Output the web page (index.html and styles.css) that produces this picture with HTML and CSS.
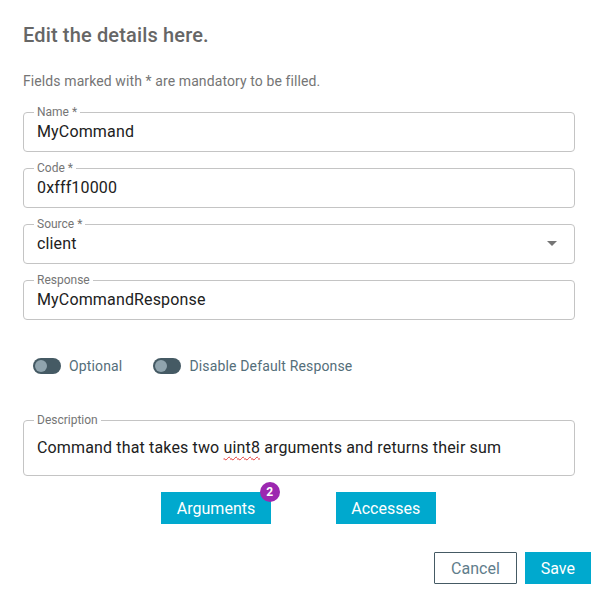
FILE: index.html
```html
<!DOCTYPE html>
<html lang="en">
<head>
<meta charset="utf-8">
<title>Edit command</title>
<link rel="stylesheet" href="styles.css">
</head>
<body>
<div class="dialog">
  <div class="content">
    <h2 class="title">Edit the details here.</h2>
    <p class="hint">Fields marked with * are mandatory to be filled.</p>
    <div class="fields">
      <fieldset class="field"><legend>Name *</legend><div class="value">MyCommand</div></fieldset>
      <fieldset class="field"><legend>Code *</legend><div class="value">0xfff10000</div></fieldset>
      <fieldset class="field"><legend>Source *</legend><div class="value select"><span>client</span><span class="arrow"></span></div></fieldset>
      <fieldset class="field"><legend>Response</legend><div class="value">MyCommandResponse</div></fieldset>
    </div>
    <div class="toggles">
      <label class="toggle"><span class="track"><span class="thumb"></span></span><span class="toggle-text">Optional</span></label>
      <label class="toggle"><span class="track"><span class="thumb"></span></span><span class="toggle-text">Disable Default Response</span></label>
    </div>
    <fieldset class="field desc"><legend>Description</legend><div class="value">Command that takes two <span class="misspelled">uint8</span> arguments and returns their sum</div></fieldset>
    <div class="tabs">
      <button class="btn primary badge-host">Arguments<span class="badge">2</span></button>
      <button class="btn primary">Accesses</button>
    </div>
  </div>
  <div class="actions">
    <button class="btn outline">Cancel</button>
    <button class="btn primary">Save</button>
  </div>
</div>
</body>
</html>
```
FILE: styles.css
```css
* { box-sizing: border-box; }
html, body { margin: 0; padding: 0; background: #fff; }
body { font-family: Roboto, "Noto Sans", Arial, sans-serif; color: #212121; }

.dialog { width: 598px; }
.content { padding: 0 23px; }

.title {
  margin: 23px 0 0;
  font-size: 20px;
  line-height: 24px;
  font-weight: 500;
  letter-spacing: 0.15px;
  color: #666666;
}
.hint {
  margin: 26px 0 0;
  font-size: 14px;
  line-height: 16px;
  letter-spacing: 0.1px;
  color: #757575;
}

.fields {
  margin-top: 17px;
  display: flex;
  flex-direction: column;
  gap: 10px;
}

.field {
  margin: 0;
  min-width: 0;
  border: 1px solid #c4c4c4;
  border-radius: 4px;
  padding: 0 13px 6px;
}
.field legend {
  font-size: 12px;
  line-height: 12px;
  padding: 0 3px;
  margin-left: -3px;
  color: #757575;
}
.value {
  font-size: 16px;
  line-height: 27px;
  letter-spacing: 0.15px;
  color: #212121;
  white-space: nowrap;
}
.select {
  display: flex;
  justify-content: space-between;
  align-items: center;
}
.arrow {
  width: 0;
  height: 0;
  margin-right: 4px;
  border-left: 5px solid transparent;
  border-right: 5px solid transparent;
  border-top: 5px solid #757575;
}

.toggles {
  margin-top: 36px;
  padding-left: 10px;
  display: flex;
  gap: 31px;
  height: 20px;
  align-items: center;
}
.toggle {
  display: flex;
  align-items: center;
  gap: 8px;
  font-size: 14px;
  letter-spacing: 0.15px;
  color: #546e7a;
}
.track {
  width: 28px;
  height: 16px;
  border-radius: 8px;
  background: #455a64;
  display: flex;
  align-items: center;
  padding-left: 2px;
}
.thumb {
  width: 12px;
  height: 12px;
  border-radius: 50%;
  background: #90a4ae;
}

.desc { margin-top: 38px; padding-bottom: 15px; }
.desc .value { padding-top: 10px; line-height: 24px; }
.misspelled {
  text-decoration: underline wavy #e53935;
  text-decoration-thickness: 1px;
  text-underline-offset: 3px;
  text-decoration-skip-ink: none;
}

.tabs {
  margin-top: 16px;
  display: flex;
  justify-content: center;
  gap: 65px;
  padding-right: 1px;
}

.btn {
  font-family: Roboto, "Noto Sans", Arial, sans-serif;
  font-size: 16px;
  height: 32px;
  padding: 0 16px;
  border: none;
  border-radius: 0;
  cursor: pointer;
}
.tabs .btn { padding: 0 15.5px; }
.primary { background: #00a9ce; color: #fff; }
.outline {
  background: #fff;
  color: #607d8b;
  border: 1px solid #455a64;
  border-radius: 1px;
  padding: 0 16px;
}
.badge-host { position: relative; }
.badge {
  position: absolute;
  top: -10px;
  right: -9px;
  width: 20px;
  height: 20px;
  border-radius: 50%;
  background: #9c27b0;
  color: #fff;
  font-size: 12px;
  font-weight: 700;
  line-height: 20px;
  text-align: center;
}

.actions {
  margin-top: 28px;
  padding-right: 7px;
  display: flex;
  justify-content: flex-end;
  gap: 8px;
}
```
